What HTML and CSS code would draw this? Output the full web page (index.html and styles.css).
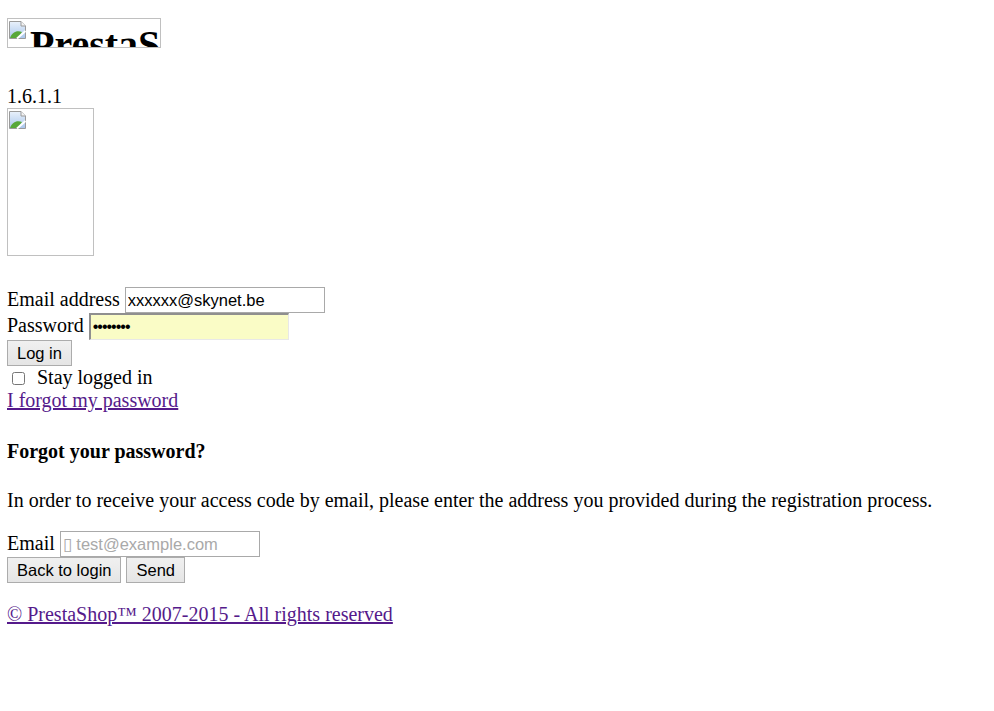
FILE: index.html
```html
<!DOCTYPE html>
<html lang="en">
<head>
<meta charset="utf-8">
<title>PrestaShop - Administration</title>
<link rel="stylesheet" href="styles.css">
</head>
<body>
<div class="page">
  <h1 class="brand">
    <span class="broken logo">
      <svg class="bi" viewBox="0 0 20 20" width="20" height="20" aria-hidden="true">
        <defs>
          <linearGradient id="sky1" x1="0" y1="0" x2="0" y2="1">
            <stop offset="0" stop-color="#e9f1fb"/>
            <stop offset="1" stop-color="#a9c6ec"/>
          </linearGradient>
        </defs>
        <path d="M1.5 1.5 H13 L17.5 6 V18.5 H1.5 Z" fill="url(#sky1)" stroke="#9a9a9a"/>
        <path d="M13 1.5 V6 H17.5" fill="#f4f4f4" stroke="#9a9a9a"/>
        <path d="M2 18 C4 12 9 10 14 12 L10 18 Z" fill="#58a83a"/>
        <path d="M9 18.5 L17.5 11" stroke="#fff" stroke-width="2"/>
      </svg>
      <span class="logo-alt">PrestaShop</span>
    </span>
  </h1>
  <div class="version">1.6.1.1</div>
  <span class="broken shop">
    <svg class="bi" viewBox="0 0 20 20" width="20" height="20" aria-hidden="true">
      <defs>
        <linearGradient id="sky2" x1="0" y1="0" x2="0" y2="1">
          <stop offset="0" stop-color="#e9f1fb"/>
          <stop offset="1" stop-color="#a9c6ec"/>
        </linearGradient>
      </defs>
      <path d="M1.5 1.5 H13 L17.5 6 V18.5 H1.5 Z" fill="url(#sky2)" stroke="#9a9a9a"/>
      <path d="M13 1.5 V6 H17.5" fill="#f4f4f4" stroke="#9a9a9a"/>
      <path d="M2 18 C4 12 9 10 14 12 L10 18 Z" fill="#58a83a"/>
      <path d="M9 18.5 L17.5 11" stroke="#fff" stroke-width="2"/>
    </svg>
  </span>

  <form class="login">
    <div class="row"><label for="email">Email address</label> <input class="field" id="email" type="text" value="xxxxxx@skynet.be"></div>
    <div class="row"><label for="passwd">Password</label> <input class="field autofill" id="passwd" type="password" value="password"></div>
    <div class="row"><button type="button" class="btn">Log in</button></div>
    <div class="row check"><input type="checkbox" id="stay" class="cb"> <label for="stay">Stay logged in</label></div>
    <div class="row"><a href="#" class="link">I forgot my password</a></div>
  </form>

  <form class="forgot">
    <h4 class="title">Forgot your password?</h4>
    <p class="text">In order to receive your access code by email, please enter the address you provided during the registration process.</p>
    <div class="row"><label for="email_forgot">Email</label> <input class="field" id="email_forgot" type="text" placeholder="▯ test@example.com"></div>
    <div class="row"><button type="button" class="btn">Back to login</button> <button type="button" class="btn">Send</button></div>
  </form>

  <p class="footer"><a href="#" class="link">© PrestaShop™ 2007-2015 - All rights reserved</a></p>
</div>
</body>
</html>
```
FILE: styles.css
```css
html, body {
  margin: 0;
  padding: 0;
  background: #ffffff;
}
body {
  font-family: "Liberation Serif", "Times New Roman", serif;
  font-size: 20px;
  color: #000000;
}
.page {
  padding: 18px 7px 0 7px;
}
.brand {
  margin: 0;
  font-size: 40px;
  line-height: 0;
  height: 30px;
}
.broken {
  display: inline-block;
  box-sizing: border-box;
  border: 1px solid #c0c0c0;
  overflow: hidden;
  vertical-align: top;
}
.bi {
  display: block;
  flex: none;
}
.logo {
  display: inline-flex;
  align-items: flex-start;
  width: 154px;
  height: 30px;
}
.logo .bi {
  margin: 1px 2px 0 0;
}
.logo-alt {
  font-size: 40px;
  font-weight: bold;
  line-height: 46px;
  margin-top: 3px;
  white-space: nowrap;
}
.version {
  margin-top: 37px;
  line-height: 23px;
}
.shop {
  width: 87px;
  height: 148px;
}
.shop .bi {
  margin: 1px 0 0 0;
}
.login {
  margin-top: 31px;
}
.row {
  line-height: 23px;
}
.field {
  box-sizing: border-box;
  width: 200px;
  height: 26px;
  border: 1px solid #a9a9a9;
  padding: 1px 2px;
  font-family: "Liberation Sans", Arial, sans-serif;
  font-size: 16.5px;
  color: #000;
  background: #fff;
  margin: 0;
  vertical-align: baseline;
}
.field::placeholder {
  color: #a9a9a9;
}
.autofill {
  height: 27px;
  border-width: 2px 1px 1px 2px;
  border-style: solid;
  border-color: #8f8f8f #e8e8e8 #e8e8e8 #8f8f8f;
  background: #fafcc6;
  font-size: 16px;
  letter-spacing: -1px;
}
.btn {
  box-sizing: border-box;
  height: 26px;
  margin: 0;
  padding: 0 9px;
  font-family: "Liberation Sans", Arial, sans-serif;
  font-size: 16.5px;
  color: #000;
  border: 1px solid #acacac;
  border-radius: 0;
  background: linear-gradient(#f0f0f0, #e5e5e5);
}
.cb {
  width: 13px;
  height: 13px;
  margin: 0 7px 0 5px;
  vertical-align: -1px;
}
.link {
  color: #551a8b;
  text-decoration: underline;
}
.forgot {
  margin: 0;
}
.title {
  font-size: 20px;
  font-weight: bold;
  margin: 28px 0 26px 0;
  line-height: 23px;
}
.text {
  margin: 0 0 19px 0;
  line-height: 23px;
}
.footer {
  margin: 20px 0 0 0;
  line-height: 23px;
}
```
